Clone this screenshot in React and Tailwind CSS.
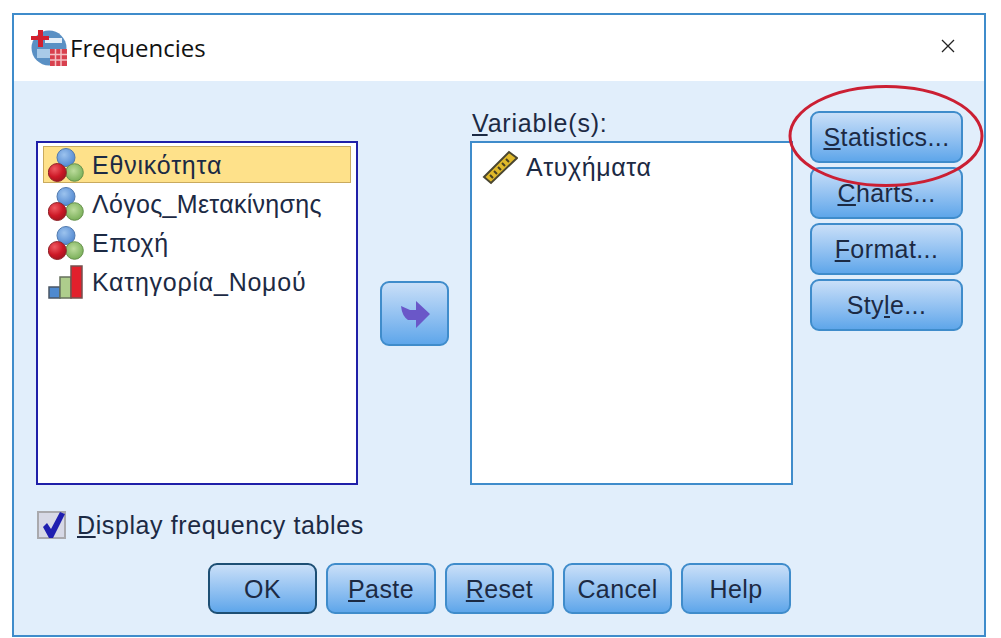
import React from "react";

const sans = "font-['Liberation_Sans',Arial,sans-serif]";

const NominalIcon = ({ id }) => (
  <svg width="36" height="36" viewBox="0 0 36 36" className="shrink-0">
    <defs>
      <radialGradient id={`${id}b`} cx="40%" cy="35%" r="70%">
        <stop offset="0%" stopColor="#9cc3ee" />
        <stop offset="100%" stopColor="#4f86d0" />
      </radialGradient>
      <radialGradient id={`${id}g`} cx="45%" cy="40%" r="70%">
        <stop offset="0%" stopColor="#bcdc9c" />
        <stop offset="100%" stopColor="#6fa84e" />
      </radialGradient>
      <radialGradient id={`${id}r`} cx="35%" cy="30%" r="75%">
        <stop offset="0%" stopColor="#ef5a62" />
        <stop offset="60%" stopColor="#cc1826" />
        <stop offset="100%" stopColor="#a0141e" />
      </radialGradient>
    </defs>
    <circle cx="18" cy="10.5" r="9" fill={`url(#${id}b)`} stroke="#4f78ad" />
    <circle cx="26.5" cy="25.5" r="8.8" fill={`url(#${id}g)`} stroke="#66924c" />
    <circle cx="9.3" cy="25.5" r="9" fill={`url(#${id}r)`} stroke="#8f2229" />
  </svg>
);

const OrdinalIcon = () => (
  <svg width="36" height="36" viewBox="0 0 36 36" className="shrink-0">
    <rect x="1" y="23" width="11" height="11" fill="#4f8ad0" stroke="#4a5564" strokeWidth="1.5" />
    <rect x="12" y="13" width="11" height="21" fill="#aecd8c" stroke="#66705c" strokeWidth="1.5" />
    <rect x="23" y="2" width="11" height="32" fill="#e2202c" stroke="#75504f" strokeWidth="1.5" />
  </svg>
);

const RulerIcon = () => (
  <svg width="36" height="36" viewBox="0 0 36 36" className="shrink-0">
    <path d="M2 27 L27 2 L35 8 L9 33 Z" fill="#e0b92a" stroke="#4a4630" strokeWidth="2" />
    <path d="M8 25 l3 3 M12 21 l3 3 M16 17 l3 3 M20 13 l3 3 M24 9 l3 3" stroke="#4a4222" strokeWidth="2" />
  </svg>
);

const TitleIcon = () => (
  <svg width="36" height="36" viewBox="0 0 36 36" className="shrink-0">
    <circle cx="18" cy="18" r="17.5" fill="#5a90c4" />
    <rect x="14" y="8" width="17" height="5" fill="#e4eef8" />
    <rect x="6" y="19" width="14" height="9" fill="#a8cae8" />
    <path d="M7 0 h5 v6 h6 v4 h-6 v7 h-5 v-7 h-7 v-4 h7 z" fill="#d3202e" />
    <rect x="19" y="19" width="17" height="17" fill="#d8404e" />
    <path d="M19 24.5 h17 M19 30 h17 M24.5 19 v17 M30 19 v17" stroke="#f3c0c4" strokeWidth="1.5" />
  </svg>
);

const VarRow = ({ icon, label, selected, tracking }) => (
  <div
    className={`flex h-[37px] items-center gap-[8px] border pl-[4px] ${
      selected ? "border-[#c9aa5e] bg-[#fee18a]" : "border-transparent"
    }`}
  >
    {icon}
    <span className={`pt-[2px] text-[25px] leading-none text-[#1c2a44] ${tracking}`}>{label}</span>
  </div>
);

const Btn = ({ className = "", children }) => (
  <button
    className={`flex items-center justify-center rounded-[9px] border-2 bg-gradient-to-b from-[#c9dff8] to-[#5ea6ea] text-[25px] leading-none tracking-[0.4px] text-[#1c2a44] ${className}`}
  >
    {children}
  </button>
);

const App = () => {
  return (
    <div className={`h-[638px] w-[1001px] overflow-hidden bg-white pl-[12px] pt-[13px] ${sans}`}>
      <div className="relative flex h-[624px] w-[974px] flex-col border-2 border-[#3f8ccb]">
        {/* title bar */}
        <div className="flex h-[66px] items-center justify-between bg-white pl-[17px] pr-[29px]">
          <div className="flex items-center">
            <TitleIcon />
            <span className="ml-[3px] font-['Open_Sans',sans-serif] text-[24px] leading-none text-[#111]">Frequencies</span>
          </div>
          <svg className="mb-[4px]" width="14" height="14" viewBox="0 0 14 14">
            <path d="M1 1 L13 13 M13 1 L1 13" stroke="#222" strokeWidth="1.3" />
          </svg>
        </div>

        {/* dialog body */}
        <div className="flex flex-1 flex-col bg-[#e1eefb] pl-[22px] pt-[30px]">
          <div className="flex h-[374px]">
            <div className="mt-[30px] h-[344px] w-[322px] border-2 border-[#1f1fa8] bg-white px-[5px] pt-[3px]">
              <div className="flex flex-col gap-[2px]">
                <VarRow icon={<NominalIcon id="n1" />} label="Εθνικότητα" tracking="tracking-[0.8px]" selected />
                <VarRow icon={<NominalIcon id="n2" />} label="Λόγος_Μετακίνησης" tracking="tracking-[0.3px]" />
                <VarRow icon={<NominalIcon id="n3" />} label="Εποχή" tracking="tracking-[0.6px]" />
                <VarRow icon={<OrdinalIcon />} label="Κατηγορία_Νομού" tracking="tracking-[0.75px]" />
              </div>
            </div>

            <div className="ml-[22px] mt-[170px]">
              <Btn className="h-[65px] w-[69px] border-[#3f8ccb]">
                <svg width="32" height="30" viewBox="0 0 32 30">
                  <path d="M2 7 L11 11 L17 11 L17 2 L31 15 L17 29 L17 21 L9 21 Q3 17 2 7 Z" fill="#6a57c8" />
                </svg>
              </Btn>
            </div>

            <div className="ml-[21px] flex w-[323px] flex-col">
              <div className="h-[30px] pl-[2px] text-[25px] leading-[24px] tracking-[0.8px] text-[#1c2a44]">
                <u className="underline-offset-2">V</u>ariable(s):
              </div>
              <div className="h-[344px] border-2 border-[#3f8ccb] bg-white pl-[10px] pt-[6px]">
                <div className="flex h-[37px] items-center gap-[8px]">
                  <RulerIcon />
                  <span className="text-[25px] leading-none tracking-[0.6px] text-[#1c2a44]">Ατυχήματα</span>
                </div>
              </div>
            </div>

            <div className="ml-[17px] flex w-[153px] flex-col gap-[4px]">
              <Btn className="h-[52px] border-[#3f8ccb]"><span><u>S</u>tatistics...</span></Btn>
              <Btn className="h-[52px] border-[#3f8ccb]"><span><u>C</u>harts...</span></Btn>
              <Btn className="h-[52px] border-[#3f8ccb]"><span><u>F</u>ormat...</span></Btn>
              <Btn className="h-[52px] border-[#3f8ccb]"><span>Sty<u>l</u>e...</span></Btn>
            </div>
          </div>

          <div className="mt-[26px] flex h-[28px] items-center pl-[1px]">
            <div className="flex h-[28px] w-[29px] items-center justify-center border-2 border-[#a9a9ad] bg-[#d7d9e6]">
              <svg width="25" height="27" viewBox="0 0 25 27" className="overflow-visible">
                <path d="M4 15 L8 11 L12 17 L21 0 L26 2 L14 26 L10 26 Z" fill="#1f1fb0" />
              </svg>
            </div>
            <span className="ml-[11px] text-[25px] leading-none tracking-[0.6px] text-[#1c2a44]">
              <u>D</u>isplay frequency tables
            </span>
          </div>

          <div className="mt-[24px] flex h-[51px] gap-[9px] pl-[172px]">
            <Btn className="w-[109px] border-[#1d4f74] pt-[2px]">OK</Btn>
            <Btn className="w-[110px] border-[#3f8ccb] pt-[2px]"><span><u>P</u>aste</span></Btn>
            <Btn className="w-[109px] border-[#3f8ccb] pt-[2px]"><span><u>R</u>eset</span></Btn>
            <Btn className="w-[109px] border-[#3f8ccb] pt-[2px]">Cancel</Btn>
            <Btn className="w-[110px] border-[#3f8ccb] pt-[2px]">Help</Btn>
          </div>
        </div>

        {/* red annotation circled over the Statistics button */}
        <svg className="absolute left-[772px] top-[67px]" width="200" height="108" viewBox="0 0 200 108" fill="none">
          <ellipse cx="100" cy="54" rx="96" ry="49.5" stroke="#cb1f33" strokeWidth="3" />
        </svg>
      </div>
    </div>
  );
};

export default App;
